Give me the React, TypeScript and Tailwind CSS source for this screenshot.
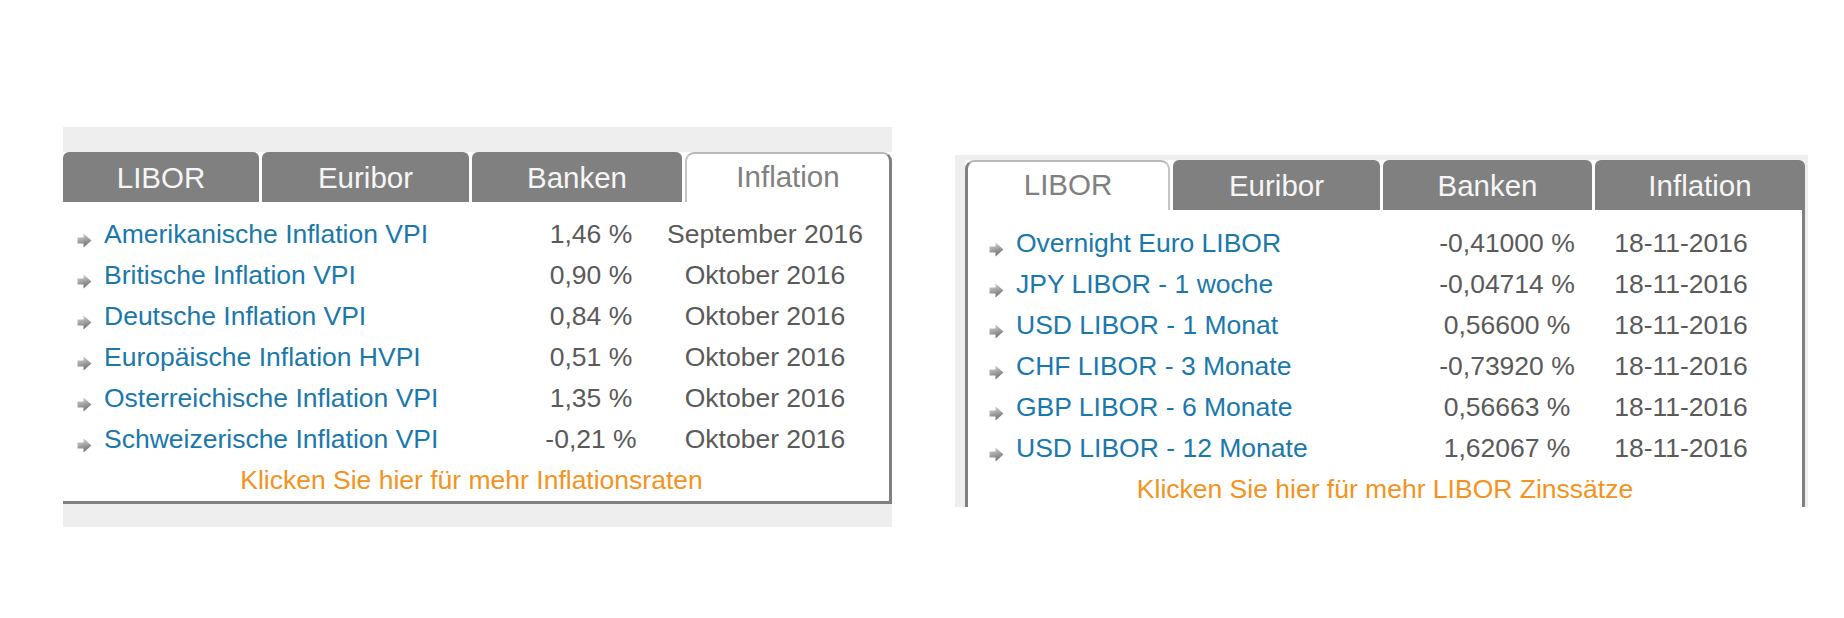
import React from "react";

const font = { fontFamily: '"Liberation Sans", Arial, sans-serif' };

function Arrow() {
  return (
    <svg width="15" height="15" viewBox="0 0 15 15" className="shrink-0 self-start mt-[19px]">
      <defs>
        <linearGradient id="ag" x1="0" y1="0" x2="0.3" y2="1">
          <stop offset="0" stopColor="#dadada" />
          <stop offset="0.5" stopColor="#a8a8a8" />
          <stop offset="1" stopColor="#727272" />
        </linearGradient>
      </defs>
      <path d="M0.5 4.5 L6.5 4.5 L6.5 0.5 L14.5 7.5 L6.5 14.5 L6.5 10.5 L0.5 10.5 Z" fill="url(#ag)" />
    </svg>
  );
}

type Row = { name: string; value: string; date: string };

const inflation: Row[] = [
  { name: "Amerikanische Inflation VPI", value: "1,46 %", date: "September 2016" },
  { name: "Britische Inflation VPI", value: "0,90 %", date: "Oktober 2016" },
  { name: "Deutsche Inflation VPI", value: "0,84 %", date: "Oktober 2016" },
  { name: "Europäische Inflation HVPI", value: "0,51 %", date: "Oktober 2016" },
  { name: "Osterreichische Inflation VPI", value: "1,35 %", date: "Oktober 2016" },
  { name: "Schweizerische Inflation VPI", value: "-0,21 %", date: "Oktober 2016" },
];

const libor: Row[] = [
  { name: "Overnight Euro LIBOR", value: "-0,41000 %", date: "18-11-2016" },
  { name: "JPY LIBOR - 1 woche", value: "-0,04714 %", date: "18-11-2016" },
  { name: "USD LIBOR - 1 Monat", value: "0,56600 %", date: "18-11-2016" },
  { name: "CHF LIBOR - 3 Monate", value: "-0,73920 %", date: "18-11-2016" },
  { name: "GBP LIBOR - 6 Monate", value: "0,56663 %", date: "18-11-2016" },
  { name: "USD LIBOR - 12 Monate", value: "1,62067 %", date: "18-11-2016" },
];

function Tab({ label, w, active, side }: { label: string; w: string; active?: boolean; side?: "left" | "right" }) {
  if (active) {
    const borders =
      side === "right"
        ? "border-l-[2px] border-l-[#c4c4c4] border-r-[3px] border-r-[#808080]"
        : "border-l-[3px] border-l-[#808080] border-r-[2px] border-r-[#c4c4c4]";
    return (
      <div
        className={`${w} h-[50px] bg-white rounded-t-[9px] border-t-[2px] border-t-[#b8b8b8] ${borders} text-[#808080] text-[29.5px] leading-[46px] text-center`}
      >
        {label}
      </div>
    );
  }
  return (
    <div className={`${w} h-[50px] bg-[#808080] rounded-t-[6px] text-[#f6f6f6] text-[29.5px] leading-[50px] text-center pt-[1px]`}>
      {label}
    </div>
  );
}

function DataRow({ r, nameW, valW, dateW, gap }: { r: Row; nameW: string; valW: string; dateW: string; gap: string }) {
  return (
    <div className="flex h-[41px] leading-[41px] text-[26.5px]">
      <div className={`${nameW} flex`}>
        <Arrow />
        <span className={`${gap} text-[#1a78ac] whitespace-nowrap`}>{r.name}</span>
      </div>
      <div className={`${valW} text-center text-[#5a5a5a] whitespace-nowrap`}>{r.value}</div>
      <div className={`${dateW} text-center text-[#5a5a5a] whitespace-nowrap`}>{r.date}</div>
    </div>
  );
}

export default function App() {
  return (
    <div className="w-[1844px] h-[618px] bg-white flex items-start" style={font}>
      {/* Left panel */}
      <div className="ml-[63px] mt-[127px] w-[829px] bg-[#eeeeee] pt-[25px] pb-[23px]">
        <div className="flex gap-[3px] bg-white">
          <Tab label="LIBOR" w="w-[196px]" />
          <Tab label="Euribor" w="w-[207px]" />
          <Tab label="Banken" w="w-[210px]" />
          <Tab label="Inflation" w="w-[207px]" active side="right" />
        </div>
        <div className="bg-white border-r-[3px] border-b-[3px] border-[#808080] pt-[12px] pl-[14px]">
          {inflation.map((r) => (
            <DataRow key={r.name} r={r} nameW="w-[447px]" valW="w-[134px]" dateW="w-[214px]" gap="ml-[12px]" />
          ))}
          <div className="h-[41px] leading-[41px] text-[26.5px] text-center text-[#f39321] pr-[23px]">
            Klicken Sie hier für mehr Inflationsraten
          </div>
        </div>
      </div>

      {/* Right panel */}
      <div className="ml-[63px] mt-[155px] w-[853px] bg-[#eeeeee] pt-[5px] pl-[10px] pr-[3px]">
        <div className="flex gap-[3px] bg-white">
          <Tab label="LIBOR" w="w-[205px]" active side="left" />
          <Tab label="Euribor" w="w-[207px]" />
          <Tab label="Banken" w="w-[209px]" />
          <Tab label="Inflation" w="w-[210px]" />
        </div>
        <div className="h-[297px] bg-white border-l-[3px] border-r-[3px] border-[#808080] pt-[13px] pl-[21px]">
          {libor.map((r) => (
            <DataRow key={r.name} r={r} nameW="w-[443px]" valW="w-[150px]" dateW="w-[198px]" gap="ml-[12px]" />
          ))}
          <div className="h-[41px] leading-[41px] text-[26.5px] text-center text-[#f39321] pr-[21px]">
            Klicken Sie hier für mehr LIBOR Zinssätze
          </div>
        </div>
      </div>
    </div>
  );
}
